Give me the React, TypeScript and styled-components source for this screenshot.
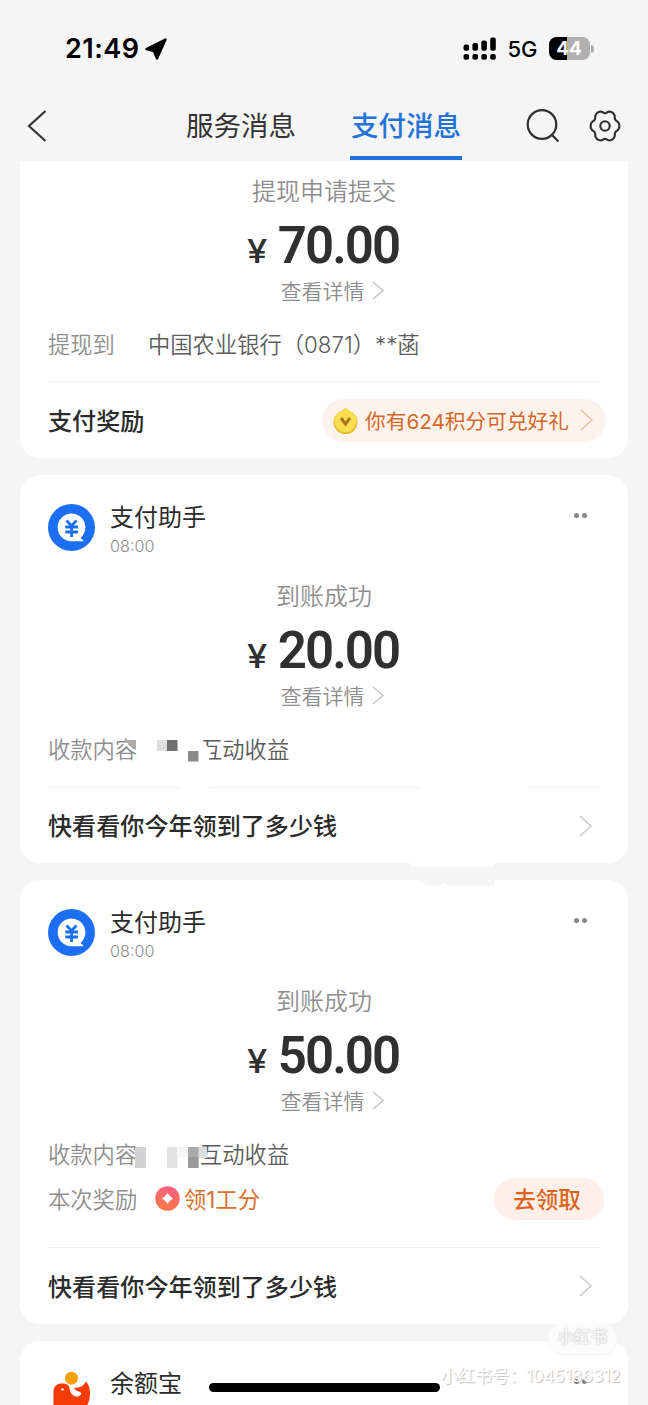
import React from "react";
import styled, { createGlobalStyle } from "styled-components";

const Global = createGlobalStyle`
  * { box-sizing: border-box; }
  body {
    margin: 0;
    background: #f5f5f5;
    font-family: Inter, "Noto Sans CJK SC", sans-serif;
    color: #333;
  }
`;

const Screen = styled.div`
  position: relative;
  width: 648px;
  height: 1405px;
  overflow: hidden;
  background: #f5f5f5;
`;

const StatusBar = styled.div`
  display: flex;
  align-items: center;
  height: 97px;
  padding: 0 54px 0 65px;
`;
const Clock = styled.span`
  font-size: 27px;
  font-weight: 600;
  color: #000;
  letter-spacing: 0.45px;
  margin-right: 6px;
`;
const StatusRight = styled.div`
  display: flex;
  align-items: center;
  margin-left: auto;
`;
const Network = styled.span`
  font-size: 22px;
  font-weight: 450;
  color: #000;
  margin: 0 11px 0 11px;
  letter-spacing: 0;
`;
const Battery = styled.div`
  width: 41px;
  height: 23px;
  border-radius: 7.5px;
  background: linear-gradient(90deg, #000 44%, #b0b0b0 44%);
  color: #fff;
  font-size: 19px;
  font-weight: 700;
  line-height: 23px;
  text-align: center;
`;
const BatteryTip = styled.div`
  width: 3px;
  height: 8px;
  margin-left: 1.5px;
  border-radius: 0 3px 3px 0;
  background: #b0b0b0;
`;

const NavBar = styled.nav`
  display: flex;
  align-items: center;
  height: 64px;
  padding: 0 27px 6px 27px;
`;
const Tab = styled.div<{ $active?: boolean }>`
  display: flex;
  align-items: center;
  justify-content: center;
  width: 112px;
  height: 63px;
  margin-bottom: -5px;
  padding-top: 1px;
  font-size: 27.5px;
  line-height: 1;
  white-space: nowrap;
  font-weight: ${(p) => (p.$active ? 500 : 400)};
  color: ${(p) => (p.$active ? "#2273d9" : "#333")};
  border-bottom: 4px solid ${(p) => (p.$active ? "#2273d9" : "transparent")};
  margin-left: ${(p) => (p.$active ? 53 : 137)}px;
`;
const NavIcons = styled.div`
  display: flex;
  align-items: center;
  margin-left: auto;
  gap: 28px;
`;

const Feed = styled.main`
  display: flex;
  flex-direction: column;
  gap: 17px;
  padding: 0 20px;
`;
const Card = styled.section<{ $h: number; $first?: boolean }>`
  display: flex;
  flex-direction: column;
  flex: none;
  height: ${(p) => p.$h}px;
  padding: ${(p) => (p.$first ? 12 : 29)}px 28px 0;
  border-radius: ${(p) => (p.$first ? "0 0 20px 20px" : "20px")};
  background: #fff;
`;
const Header = styled.header`
  display: flex;
  height: 47px;
  margin-bottom: 27px;
`;
const Sender = styled.div`
  display: flex;
  flex-direction: column;
  margin-left: 15px;
`;
const Name = styled.span`
  height: 26px;
  font-size: 24px;
  line-height: 28px;
  color: #2b2b2b;
`;
const Time = styled.span`
  margin-top: 6px;
  font-size: 16.2px;
  line-height: 20px;
  font-weight: 300;
  color: #8e8e8e;
`;
const More = styled.div`
  display: flex;
  gap: 3px;
  margin: 9px 13px 0 auto;
  &::before,
  &::after {
    content: "";
    width: 5px;
    height: 5px;
    border-radius: 50%;
    background: #858585;
  }
`;
const Title = styled.div`
  height: 36px;
  font-size: 24px;
  line-height: 37px;
  text-align: center;
  font-weight: 350;
  color: #8e8e8e;
`;
const Amount = styled.div`
  display: flex;
  align-items: baseline;
  justify-content: center;
  height: 64px;
  padding-right: 1px;
  font-family: Roboto, sans-serif;
  font-size: 51px;
  line-height: 74px;
  font-weight: 600;
  letter-spacing: -1.9px;
  color: #303030;
`;
const Yen = styled.span`
  margin-right: 12px;
  font-family: Inter, sans-serif;
  font-size: 32.5px;
  line-height: 1;
  font-weight: 500;
  letter-spacing: 0;
  transform: scaleX(1.12);
`;
const Detail = styled.div`
  display: flex;
  align-items: center;
  justify-content: center;
  gap: 7px;
  height: 34px;
  margin: 0 0 15px 16px;
  font-size: 21px;
  font-weight: 350;
  color: #8e8e8e;
`;
const Row = styled.div`
  display: flex;
  align-items: center;
  position: relative;
  height: 45px;
  padding-bottom: 3px;
  font-size: 22.3px;
  font-weight: 350;
`;
const Label = styled.span<{ $w: number }>`
  width: ${(p) => p.$w}px;
  color: #8e8e8e;
`;
const Value = styled.span`
  color: #5c5c5c;
  white-space: pre;
`;
const Divider = styled.div<{ $top: number; $broken?: boolean }>`
  flex: none;
  height: 1px;
  margin-top: ${(p) => p.$top}px;
  background: ${(p) =>
    p.$broken
      ? "linear-gradient(90deg, #f2f2f2 133px, #fff 133px 161px, #f2f2f2 161px 373px, #fff 373px 480px, #f2f2f2 480px)"
      : "#f2f2f2"};
`;
const Footer = styled.footer`
  display: flex;
  flex: 1;
  align-items: center;
  justify-content: space-between;
  font-size: 24.1px;
  color: #2b2b2b;
  padding-right: 8px;
`;
const FooterText = styled.span`
  font-weight: 500;
  padding-bottom: 2px;
`;
const PointsPill = styled.div`
  display: flex;
  align-items: center;
  width: 284px;
  height: 43px;
  margin-right: -14px;
  padding: 0 13px 0 11px;
  border-radius: 22px;
  background: #fef2ec;
  color: #d4682a;
  font-size: 20.7px;
  font-weight: 400;
  white-space: nowrap;
`;
const PillText = styled.span`
  margin: 0 auto 0 7px;
  padding-bottom: 1px;
`;
const Reward = styled.span`
  display: flex;
  align-items: center;
  gap: 4px;
  color: #d8702f;
  font-weight: 400;
`;
const ClaimButton = styled.button`
  width: 110px;
  height: 42px;
  margin: 2px -4px 0 auto;
  padding: 0 4px 0 0;
  border: 0;
  border-radius: 21px;
  background: #feefe9;
  color: #dc6420;
  font: 500 22.5px/41px Inter, "Noto Sans CJK SC", sans-serif;
`;
const Overlay = styled.svg`
  position: absolute;
  left: 0;
  top: 0;
`;
const GapPatch = styled.svg`
  position: absolute;
  left: 410px;
  top: 862px;
`;
const HomeIndicator = styled.div`
  position: absolute;
  left: 209px;
  top: 1383px;
  width: 231px;
  height: 9px;
  border-radius: 5px;
  background: #000;
`;
const Badge = styled.div`
  position: absolute;
  left: 548px;
  top: 1323px;
  width: 69px;
  height: 31px;
  border-radius: 16px;
  background: rgba(252, 252, 252, 0.9);
  box-shadow: 0 1px 2px rgba(0, 0, 0, 0.08);
  color: #f4f4f4;
  font-size: 16.5px;
  line-height: 28px;
  font-weight: 700;
  text-align: center;
  text-shadow: 0 0 2px rgba(0, 0, 0, 0.28);
`;
const Watermark = styled.div`
  position: absolute;
  left: 441px;
  top: 1364px;
  color: #fff;
  font-size: 17px;
  line-height: 24px;
  white-space: nowrap;
  text-shadow: 1px 1px 1px rgba(0, 0, 0, 0.26);
`;

const Chevron = ({ w, h, color = "#c8c8c8" }: { w: number; h: number; color?: string }) => (
  <svg width={w} height={h} viewBox={`0 0 ${w} ${h}`} fill="none">
    <path d={`M1 1L${w - 1} ${h / 2}L1 ${h - 1}`} stroke={color} strokeWidth="1.5" />
  </svg>
);

const gearPath =
  Array.from({ length: 72 }, (_, i) => {
    const a = (i * Math.PI) / 36;
    const r = 13.3 + 1.3 * Math.cos(6 * a) - 0.25 * Math.cos(12 * a);
    return `${i ? "L" : "M"}${(16 + r * Math.cos(a)).toFixed(2)} ${(16 + 1.09 * r * Math.sin(a)).toFixed(2)}`;
  }).join("") + "Z";

const AssistantIcon = () => (
  <svg width="47" height="47" viewBox="0 0 47 47">
    <circle cx="23.5" cy="23.5" r="23.5" fill="#1c6ff3" />
    <path d="M23.6 9.5a13.9 13.9 0 1 0 0 27.8H35.4L35 36L32.6 33.9A13.9 13.9 0 0 0 23.6 9.5Z" fill="#fff" />
    <path
      d="M18.5 16.5L23.5 21.8L28.5 16.5M17.3 23H30M17.3 28H30M23.6 21.5V33"
      fill="none"
      stroke="#1c6ff3"
      strokeWidth="2.8"
    />
  </svg>
);

const WhaleIcon = () => (
  <svg width="47" height="47" viewBox="0 0 47 47">
    <circle cx="23.4" cy="8.2" r="6.5" fill="#f5a10c" />
    <path
      d="M5.5 36V23C5 16 9 13.5 14 13.5C19 13.5 21 15 21.500 18C22 24 26 27 30 26.500C34 25.500 34 22.500 31 21.500Q27 20.500 26 17.500Q34 19 38 11.500Q42 16 42 23C42 34 36 45 24 45H12Q5.500 44 5.500 36Z"
      fill="#f53b08"
    />
    <circle cx="14.5" cy="19.5" r="1.2" fill="#fff" />
  </svg>
);

const CoinIcon = () => (
  <svg width="25" height="27" viewBox="0 0 25 27">
    <path d="M12.5 1L17 4.2A12 12 0 1 1 8 4.2Z" fill="#e9b92b" />
    <path d="M12.5 0.5L16.5 4A11 11 0 1 1 8.5 4Z" fill="#f8de50" />
    <path d="M8 11L12.5 17L17 11" fill="none" stroke="#a8741a" strokeWidth="3" />
  </svg>
);

const WorkPointIcon = () => (
  <svg width="25" height="25" viewBox="0 0 25 25">
    <defs>
      <linearGradient id="wp" x1="0.6" y1="0" x2="0.4" y2="1">
        <stop offset="0" stopColor="#f85f80" />
        <stop offset="1" stopColor="#fb7a45" />
      </linearGradient>
    </defs>
    <circle cx="12.5" cy="12.5" r="12.3" fill="url(#wp)" />
    <path d="M12.5 7Q14.5 10.5 18 12.5Q14.5 14.5 12.5 18Q10.5 14.5 7 12.5Q10.5 10.5 12.5 7Z" fill="#fff" />
  </svg>
);

const CardHeader = ({ name, time, icon }: { name: string; time?: string; icon: React.ReactNode }) => (
  <Header>
    {icon}
    <Sender>
      <Name>{name}</Name>
      {time && <Time>{time}</Time>}
    </Sender>
    <More />
  </Header>
);

const Summary = ({ title, amount }: { title: string; amount: string }) => (
  <>
    <Title>{title}</Title>
    <Amount>
      <Yen>¥</Yen>
      {amount}
    </Amount>
    <Detail>
      查看详情
      <Chevron w={12} h={19} />
    </Detail>
  </>
);

const YearFooter = () => (
  <Footer>
    <FooterText>快看看你今年领到了多少钱</FooterText>
    <Chevron w={13} h={22} />
  </Footer>
);

export default function App() {
  return (
    <Screen>
      <Global />
      <StatusBar>
        <Clock>21:49</Clock>
        <svg width="22" height="22" viewBox="0 0 22 22">
          <path d="M20.5 1.5L12 20.5L9 13.2L1.5 11Z" fill="#000" stroke="#000" strokeWidth="2.4" strokeLinejoin="round" />
        </svg>
        <StatusRight>
          <svg width="33" height="24" viewBox="0 0 33 24">
            {[7, 5.5, 3, 0].map((y, i) => (
              <g key={y}>
                <rect x={0.5 + i * 8.9} y={y + 0.5} width="5.6" height={13.2 - y} rx="2" />
                <rect x={0.5 + i * 8.9} y="17" width="5.6" height="5.8" rx="2" />
              </g>
            ))}
          </svg>
          <Network>5G</Network>
          <Battery>44</Battery>
          <BatteryTip />
        </StatusRight>
      </StatusBar>
      <NavBar>
        <svg width="21" height="34" viewBox="0 0 21 34" fill="none">
          <path d="M18.5 2L2 17L18.5 32" stroke="#333" strokeWidth="2.2" />
        </svg>
        <Tab>服务消息</Tab>
        <Tab $active>支付消息</Tab>
        <NavIcons>
          <svg width="35" height="34" viewBox="0 0 35 34" fill="none" stroke="#2e2e2e" strokeWidth="2.2">
            <circle cx="16" cy="15.5" r="14.3" />
            <path d="M25.5 25.5L32.5 32.5" />
          </svg>
          <svg width="32" height="34" viewBox="0 -1 32 34" fill="none" stroke="#2e2e2e" strokeWidth="2.1">
            <path d={gearPath} />
            <circle cx="16" cy="16" r="4.7" />
          </svg>
        </NavIcons>
      </NavBar>
      <Feed>
        <Card $h={297} $first>
          <Summary title="提现申请提交" amount="70.00" />
          <Row>
            <Label $w={100}>提现到</Label>
            <Value>中国农业银行（0871）**菡</Value>
          </Row>
          <Divider $top={14} />
          <Footer>
            <FooterText>支付奖励</FooterText>
            <PointsPill>
              <CoinIcon />
              <PillText>你有624积分可兑好礼</PillText>
              <Chevron w={13} h={22} color="#f0b9a0" />
            </PointsPill>
          </Footer>
        </Card>
        <Card $h={388}>
          <CardHeader name="支付助手" time="08:00" icon={<AssistantIcon />} />
          <Summary title="到账成功" amount="20.00" />
          <Row>
            <Label $w={152}>收款内容</Label>
            <Value>互动收益</Value>
            <Overlay width="180" height="45">
              <path d="M76 13H88V23Z" fill="#aaa" />
              <rect x="98" y="11" width="22" height="26" fill="#fff" />
              <rect x="109" y="13" width="10.5" height="11" fill="#dedede" />
              <rect x="119" y="13" width="10.5" height="11" fill="#707070" />
              <path d="M150 11H153L163 24L160 37H150Z" fill="#fff" />
              <rect x="140" y="24" width="10.5" height="10.5" fill="#8a8a8a" />
            </Overlay>
          </Row>
          <Divider $top={15} $broken />
          <YearFooter />
        </Card>
        <Card $h={444}>
          <CardHeader name="支付助手" time="08:00" icon={<AssistantIcon />} />
          <Summary title="到账成功" amount="50.00" />
          <Row>
            <Label $w={152}>收款内容</Label>
            <Value>互动收益</Value>
            <Overlay width="180" height="45">
              <rect x="87" y="15" width="11" height="21" fill="#d2d2d2" />
              <rect x="119" y="15" width="10.5" height="21" fill="#e3e3e3" />
              <rect x="129" y="15" width="11" height="10" fill="#f7f7f7" />
              <rect x="150" y="15" width="9" height="11" fill="#dedede" />
              <rect x="140" y="15" width="10.5" height="21" fill="#aaa" />
              <rect x="140" y="25" width="10.5" height="11" fill="#999" />
            </Overlay>
          </Row>
          <Row>
            <Label $w={107}>本次奖励</Label>
            <Reward>
              <WorkPointIcon />
              领1工分
            </Reward>
            <ClaimButton>去领取</ClaimButton>
          </Row>
          <Divider $top={25} />
          <YearFooter />
        </Card>
        <Card $h={120}>
          <CardHeader name="余额宝" icon={<WhaleIcon />} />
        </Card>
      </Feed>
      <GapPatch width="86" height="26">
        <rect x="1" y="0" width="83" height="4.5" fill="#fff" />
        <path d="M6 17Q14 24 24 24Q31 24 34 21L38 24H84V17Z" fill="#f5f5f5" />
      </GapPatch>
      <HomeIndicator />
      <Badge>小红书</Badge>
      <Watermark>小红书号：1045186312</Watermark>
    </Screen>
  );
}
